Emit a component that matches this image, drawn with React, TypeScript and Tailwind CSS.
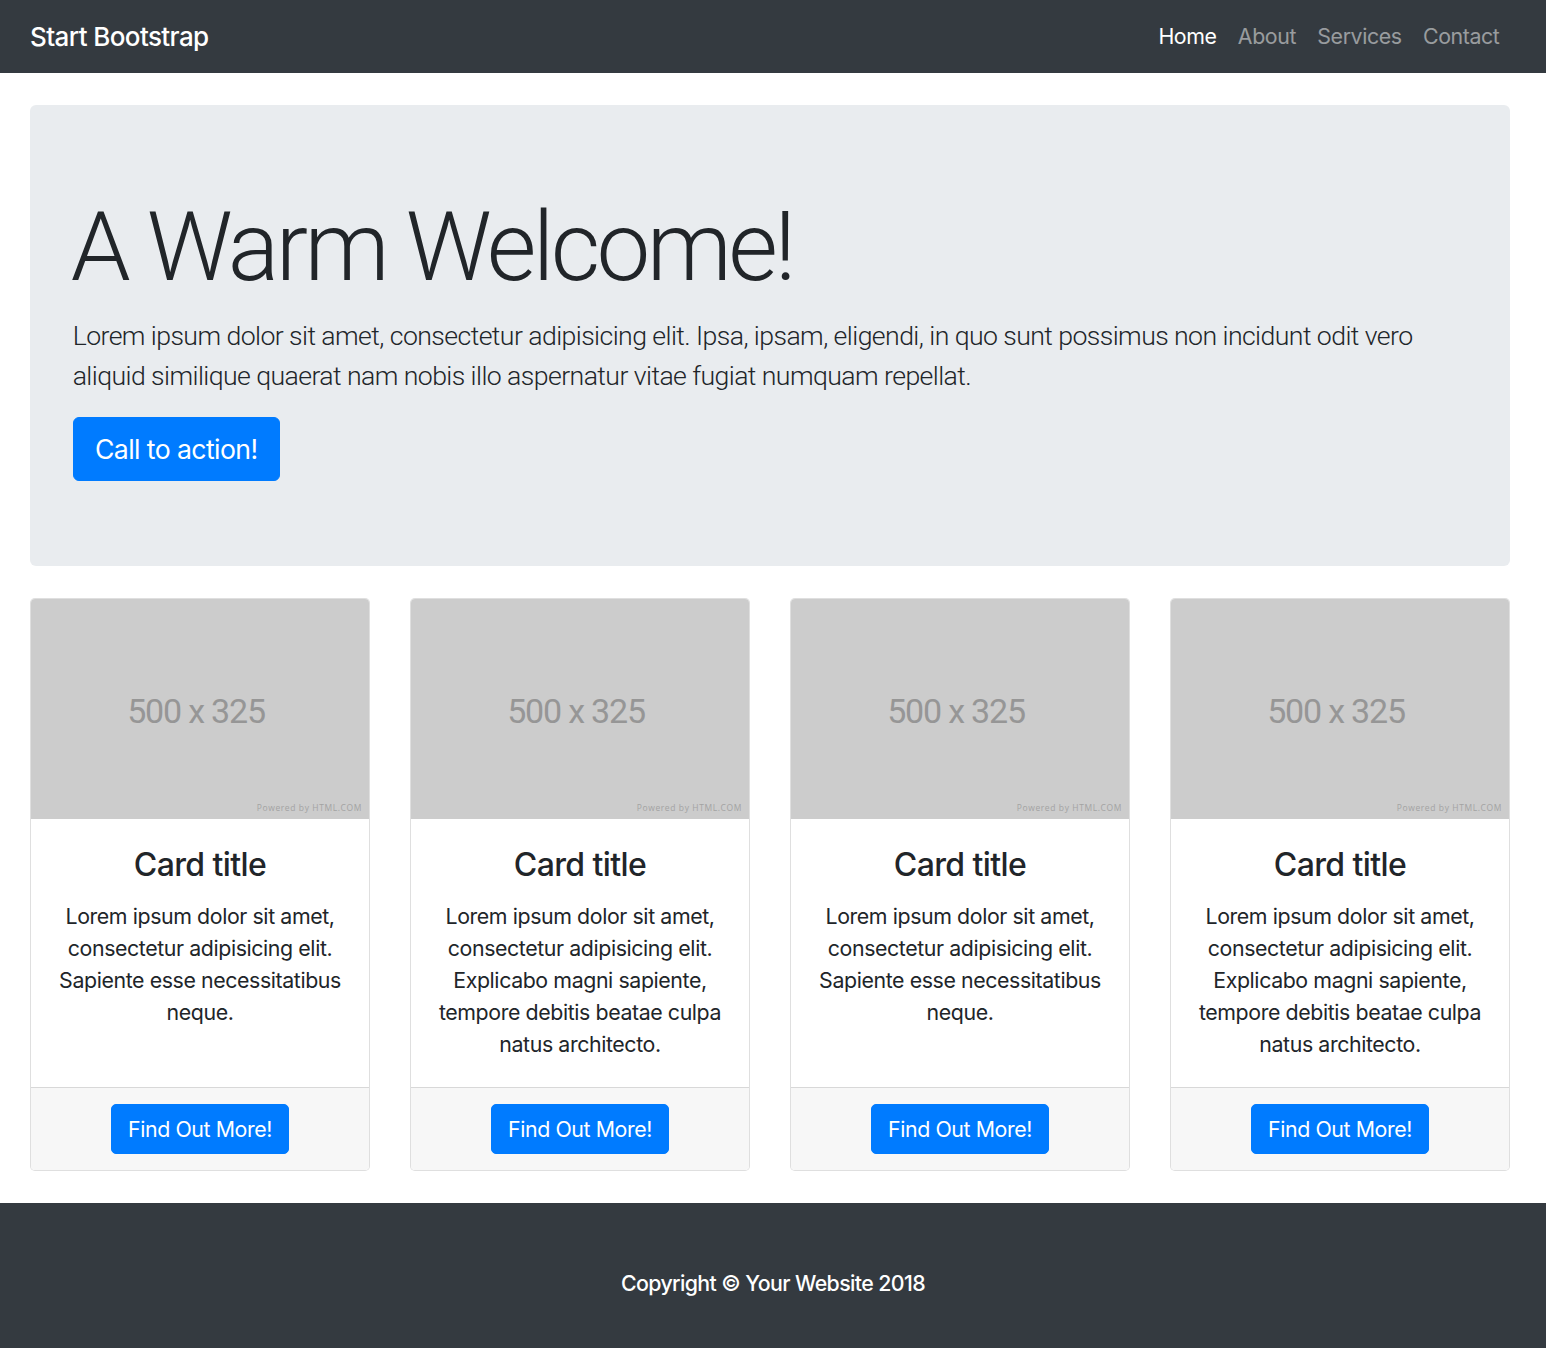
import React from "react";

const cards = [
  "Lorem ipsum dolor sit amet, consectetur adipisicing elit. Sapiente esse necessitatibus neque.",
  "Lorem ipsum dolor sit amet, consectetur adipisicing elit. Explicabo magni sapiente, tempore debitis beatae culpa natus architecto.",
  "Lorem ipsum dolor sit amet, consectetur adipisicing elit. Sapiente esse necessitatibus neque.",
  "Lorem ipsum dolor sit amet, consectetur adipisicing elit. Explicabo magni sapiente, tempore debitis beatae culpa natus architecto.",
];

function Card({ text }: { text: string }) {
  return (
    <div className="flex flex-col border border-[rgba(0,0,0,0.125)] rounded-[5px] overflow-hidden bg-white">
      <div className="relative h-[220px] bg-[#cccccc] flex items-center justify-center">
        <span className="font-['Roboto',sans-serif] text-[34px] tracking-[-1.2px] text-[#969696] mr-[8px] mt-[6px]">
          500 x 325
        </span>
        <span className="absolute right-[7px] bottom-[4px] text-[8.5px] text-[#a3a3a3] font-['Open_Sans',sans-serif] tracking-[0.6px]">
          Powered by HTML.COM
        </span>
      </div>
      <div className="flex-1 px-[26.67px] pt-[26.67px] pb-[26.67px] text-center">
        <h4 className="text-[32px] font-medium leading-[38.4px] mb-[16px] text-[#212529] tracking-[-0.6px]">Card title</h4>
        <p className="text-[21.33px] leading-[32px] text-[#212529] tracking-[-0.4px]">{text}</p>
      </div>
      <div className="border-t border-[rgba(0,0,0,0.125)] bg-[#f7f7f7] py-[16px] flex justify-center">
        <a className="bg-[#007bff] text-white text-[21.33px] leading-[32px] px-[16px] py-[8px] border border-[#007bff] rounded-[5px] tracking-[-0.4px]">
          Find Out More!
        </a>
      </div>
    </div>
  );
}

export default function App() {
  return (
    <div className="font-['Inter',sans-serif] text-[#212529] bg-white min-h-[1348px] flex flex-col">
      <nav className="bg-[#343a40] h-[73px] pl-[30px] pr-[36px] flex items-center justify-between">
        <a className="text-white text-[26px] font-medium tracking-[-0.6px]">Start Bootstrap</a>
        <div className="flex text-[21.33px] tracking-[-0.4px]">
          <a className="text-white px-[10.67px]">Home</a>
          <a className="text-[rgba(255,255,255,0.5)] px-[10.67px]">About</a>
          <a className="text-[rgba(255,255,255,0.5)] px-[10.67px]">Services</a>
          <a className="text-[rgba(255,255,255,0.5)] px-[10.67px]">Contact</a>
        </div>
      </nav>
      <main className="pl-[30px] pr-[36px]">
        <header className="mt-[32px] mb-[32px] bg-[#e9ecef] rounded-[6px] px-[42.67px] py-[85.33px]">
          <h1 className="font-['Roboto',sans-serif] text-[96px] font-light leading-[115px] mb-[10.67px] tracking-[-3.6px] ml-[-2px]">A Warm Welcome!</h1>
          <p className="font-['Roboto',sans-serif] text-[26.67px] font-light leading-[40px] mb-[21.33px] tracking-[-0.58px]">
            Lorem ipsum dolor sit amet, consectetur adipisicing elit. Ipsa, ipsam, eligendi, in quo sunt possimus non incidunt odit vero aliquid similique quaerat nam nobis illo aspernatur vitae fugiat numquam repellat.
          </p>
          <a className="inline-block bg-[#007bff] text-white text-[26.67px] leading-[40px] px-[21.33px] py-[10.67px] border border-[#007bff] rounded-[6px] tracking-[-0.6px]">
            Call to action!
          </a>
        </header>
        <div className="grid grid-cols-4 gap-[40px] mb-[32px]">
          {cards.map((t, i) => (
            <Card key={i} text={t} />
          ))}
        </div>
      </main>
      <footer className="bg-[#343a40] flex-1 pt-[64px] pb-[50px] text-center">
        <p className="text-white text-[21.33px] leading-[32px] font-medium tracking-[-0.6px]">Copyright © Your Website 2018</p>
      </footer>
    </div>
  );
}
